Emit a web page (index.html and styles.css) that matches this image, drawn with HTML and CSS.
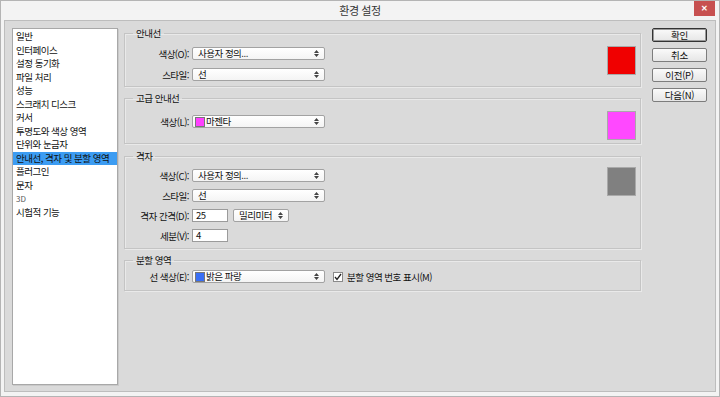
FILE: index.html
```html
<!DOCTYPE html>
<html lang="ko">
<head>
    <meta charset="UTF-8">
    <meta name="viewport" content="width=device-width, initial-scale=1.0">
    <title>환경 설정</title>
    <link rel="stylesheet" href="styles.css">
</head>
<body>
    <div class="window">
        <div class="titlebar">
            <span></span>
            <span class="title">환경 설정</span>
            <button class="close">✕</button>
        </div>
        <div class="client">
            <ul class="nav">
                <li>일반</li>
                <li>인터페이스</li>
                <li>설정 동기화</li>
                <li>파일 처리</li>
                <li>성능</li>
                <li>스크래치 디스크</li>
                <li>커서</li>
                <li>투명도와 색상 영역</li>
                <li>단위와 눈금자</li>
                <li class="active">안내선, 격자 및 분할 영역</li>
                <li>플러그인</li>
                <li>문자</li>
                <li class="small">3D</li>
                <li>시험적 기능</li>
            </ul>

            <div class="panel">
                <!-- 안내선 -->
                <fieldset class="group g1">
                    <legend>안내선</legend>
                    <div class="body">
                        <div class="rows">
                            <div class="row">
                                <span class="label">색상(O):</span>
                                <div class="select wide"><span>사용자 정의...</span>
                                    <svg class="arrows" width="5" height="7" viewBox="0 0 5 7"><path d="M0 3L2.5 0L5 3Z M0 4L2.5 7L5 4Z"/></svg>
                                </div>
                            </div>
                            <div class="row">
                                <span class="label">스타일:</span>
                                <div class="select wide"><span>선</span>
                                    <svg class="arrows" width="5" height="7" viewBox="0 0 5 7"><path d="M0 3L2.5 0L5 3Z M0 4L2.5 7L5 4Z"/></svg>
                                </div>
                            </div>
                        </div>
                        <div class="swatch red"></div>
                    </div>
                </fieldset>

                <!-- 고급 안내선 -->
                <fieldset class="group g2">
                    <legend>고급 안내선</legend>
                    <div class="body">
                        <div class="rows">
                            <div class="row">
                                <span class="label">색상(L):</span>
                                <div class="select wide"><span class="opt"><i class="chip magenta"></i>마젠타</span>
                                    <svg class="arrows" width="5" height="7" viewBox="0 0 5 7"><path d="M0 3L2.5 0L5 3Z M0 4L2.5 7L5 4Z"/></svg>
                                </div>
                            </div>
                        </div>
                        <div class="swatch magenta"></div>
                    </div>
                </fieldset>

                <!-- 격자 -->
                <fieldset class="group g3">
                    <legend>격자</legend>
                    <div class="body">
                        <div class="rows">
                            <div class="row">
                                <span class="label">색상(C):</span>
                                <div class="select wide"><span>사용자 정의...</span>
                                    <svg class="arrows" width="5" height="7" viewBox="0 0 5 7"><path d="M0 3L2.5 0L5 3Z M0 4L2.5 7L5 4Z"/></svg>
                                </div>
                            </div>
                            <div class="row">
                                <span class="label">스타일:</span>
                                <div class="select wide"><span>선</span>
                                    <svg class="arrows" width="5" height="7" viewBox="0 0 5 7"><path d="M0 3L2.5 0L5 3Z M0 4L2.5 7L5 4Z"/></svg>
                                </div>
                            </div>
                            <div class="row">
                                <span class="label">격자 간격(D):</span>
                                <div class="input">25</div>
                                <div class="select unit"><span>밀리미터</span>
                                    <svg class="arrows" width="5" height="7" viewBox="0 0 5 7"><path d="M0 3L2.5 0L5 3Z M0 4L2.5 7L5 4Z"/></svg>
                                </div>
                            </div>
                            <div class="row">
                                <span class="label">세분(V):</span>
                                <div class="input">4</div>
                            </div>
                        </div>
                        <div class="swatch gray"></div>
                    </div>
                </fieldset>

                <!-- 분할 영역 -->
                <fieldset class="group g4">
                    <legend>분할 영역</legend>
                    <div class="body">
                        <div class="rows">
                            <div class="row">
                                <span class="label">선 색상(E):</span>
                                <div class="select wide"><span class="opt"><i class="chip blue"></i>밝은 파랑</span>
                                    <svg class="arrows" width="5" height="7" viewBox="0 0 5 7"><path d="M0 3L2.5 0L5 3Z M0 4L2.5 7L5 4Z"/></svg>
                                </div>
                                <span class="check">
                                    <svg width="8" height="8" viewBox="0 0 8 8"><path d="M1 4L3 6.5L7 1" fill="none" stroke="#222" stroke-width="1.3"/></svg>
                                </span>
                                <span class="check-label">분할 영역 번호 표시(M)</span>
                            </div>
                        </div>
                    </div>
                </fieldset>
            </div>

            <div class="actions">
                <button class="default">확인</button>
                <button>취소</button>
                <button>이전(P)</button>
                <button>다음(N)</button>
            </div>
        </div>
    </div>
</body>
</html>
```

FILE: styles.css
```css
body {
    margin: 0;
    padding: 0;
    font-family: "Noto Sans CJK KR", "Noto Sans", sans-serif;
    font-size: 9.5px;
    letter-spacing: -0.5px;
    color: #111;
    background: #fff;
}
.window {
    width: 720px;
    height: 397px;
    box-sizing: border-box;
    border: 1px solid #b4b4b4;
    background: #f3f3f3;
    overflow: hidden;
}
.titlebar {
    height: 19px;
    display: grid;
    grid-template-columns: 1fr auto 1fr;
    align-items: start;
}
.title {
    font-size: 11px;
    letter-spacing: -0.4px;
    line-height: 19px;
    color: #333;
}
.close {
    justify-self: end;
    width: 21px;
    height: 15px;
    margin: 0 4px 0 0;
    padding: 0;
    border: none;
    background: #c75050;
    color: #fff;
    font-size: 8px;
    line-height: 15px;
    font-weight: bold;
}
.client {
    margin: 0 3px;
    height: 372px;
    box-sizing: border-box;
    border: 1px solid #bdbdbd;
    background: #dadada;
    padding: 7px 0 0 7px;
    display: flex;
    align-items: flex-start;
}
.nav {
    list-style: none;
    margin: 0;
    padding: 1px 0 0;
    width: 106px;
    height: 357px;
    box-sizing: border-box;
    background: #fff;
    border: 1px solid #a8a8a8;
    box-shadow: 1px 1px 0 #c9c9c9;
}
.nav li {
    height: 13.5px;
    line-height: 13.5px;
    padding-left: 3px;
    white-space: nowrap;
}
.nav li.active {
    background: #3c9cf2;
}
.nav li.small {
    font-size: 8px;
    letter-spacing: 0;
    color: #555;
}
.panel {
    margin: -2px 0 0 6px;
    width: 517px;
}
.group {
    margin: 4px 0 0;
    padding: 0 4px 0 4px;
    border: 1px solid #c4c4c4;
    box-shadow: inset 1px 1px 0 #e9e9e9, 1px 1px 0 #e9e9e9;
    min-width: 0;
}
.group.g1 {
    margin-top: 0;
}
.group.g3 {
    margin-top: 5px;
}
.group legend {
    margin-left: 4px;
    padding: 0 3px;
    line-height: 14px;
    height: 14px;
}
.body {
    display: flex;
    align-items: flex-start;
}
.g1 .body { padding: 6px 0 5px; }
.g1 .rows { margin-top: 1px; }
.g2 .body { padding: 6px 0 3px; }
.g2 .rows { margin-top: 4px; }
.g3 .body { padding: 4px 0 6px; }
.g3 .rows { margin-top: 2px; gap: 7px; }
.g4 .body { padding: 3px 0 7px; }
.rows {
    display: flex;
    flex-direction: column;
    gap: 8px;
}
.row {
    display: flex;
    align-items: center;
    height: 13px;
    white-space: nowrap;
}
.label {
    width: 60px;
    margin-right: 3px;
    text-align: right;
}
.select {
    height: 13px;
    box-sizing: border-box;
    border: 1px solid #a2a2a2;
    border-radius: 2px;
    background: linear-gradient(#ffffff, #f4f4f4);
    padding: 0 5px 0 5px;
    display: flex;
    align-items: center;
    justify-content: space-between;
    line-height: 11px;
}
.select.wide {
    width: 133px;
}
.select.unit {
    width: 56px;
    margin-left: 5px;
}
.arrows {
    fill: #444;
}
.opt {
    display: flex;
    align-items: center;
    margin-left: -3px;
}
.chip {
    width: 10px;
    height: 10px;
    box-sizing: border-box;
    border: 1px solid #777;
    margin-right: 1px;
}
.chip.magenta { background: #ff40ff; }
.chip.blue { background: #3a6ff5; }
.input {
    width: 36px;
    height: 13px;
    box-sizing: border-box;
    border: 1px solid #9b9b9b;
    background: #fff;
    padding-left: 3px;
    line-height: 11px;
}
.swatch {
    width: 29px;
    height: 29px;
    box-sizing: border-box;
    border: 1px solid #a9a9a9;
    margin-left: auto;
}
.swatch.red { background: #f00000; }
.swatch.magenta { background: #ff48ff; }
.swatch.gray { background: #808080; }
.check {
    width: 10px;
    height: 10px;
    box-sizing: border-box;
    border: 1px solid #8a8a8a;
    background: #fff;
    margin-left: 8px;
    display: flex;
    align-items: center;
    justify-content: center;
}
.check-label {
    margin-left: 4px;
}
.actions {
    margin-left: 11px;
    width: 55px;
    display: flex;
    flex-direction: column;
    gap: 6px;
}
.actions button {
    height: 14px;
    padding: 0;
    font-family: inherit;
    font-size: 9.5px;
    letter-spacing: -0.3px;
    line-height: 11px;
    color: #111;
    border: 1px solid #7d7d7d;
    border-radius: 2px;
    background: linear-gradient(#fafafa, #e6e6e6);
}
.actions button.default {
    border-color: #333;
    box-shadow: inset 0 0 0 1px #9a9a9a;
}
```
